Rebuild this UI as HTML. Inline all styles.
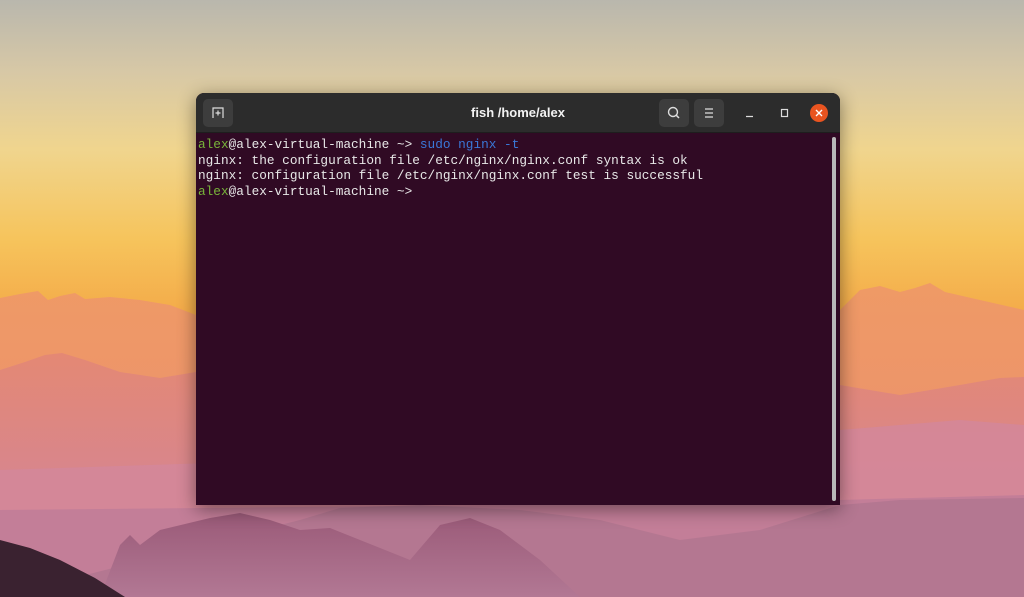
<!DOCTYPE html>
<html><head><meta charset="utf-8"><style>
*{margin:0;padding:0;box-sizing:border-box}
body{width:1024px;height:597px;overflow:hidden;position:relative;font-family:"Liberation Sans",sans-serif}
#bg{position:absolute;left:0;top:0}
.win{position:absolute;left:196px;top:93px;width:644px;height:412px;border-radius:8px 8px 0 0;overflow:hidden;box-shadow:0 4px 18px rgba(0,0,0,.45);background:#300a24}
.hdr{height:40px;background:#2c2c2c;position:relative;border-bottom:1px solid #1e1e1e}
.btn{position:absolute;top:6px;width:30px;height:28px;background:#3d3d3d;border-radius:5px}
.title{position:absolute;left:0;right:0;top:12px;text-align:center;color:#f2f2f2;font-weight:bold;font-size:13px}
.term{position:absolute;left:2px;top:43px;font-family:"Liberation Mono",monospace;font-size:12.75px;line-height:15.5px;color:#e8e8e8;white-space:pre}
.g{color:#78b53a}.b{color:#3a78d8}
.sb{position:absolute;right:4px;top:44px;width:4px;height:364px;background:#b8b8b8;border-radius:2px}
</style></head><body>
<svg id="bg" width="1024" height="597" viewBox="0 0 1024 597">
<defs><linearGradient id="sky" x1="0" y1="0" x2="0" y2="1">
<stop offset="0" stop-color="#b9b7ad"/><stop offset=".12" stop-color="#d7c8a6"/><stop offset=".25" stop-color="#f0d58e"/><stop offset=".4" stop-color="#f6c45c"/><stop offset=".52" stop-color="#f4ac4a"/><stop offset="1" stop-color="#f0a050"/></linearGradient>
<linearGradient id="m1" x1="0" y1="0" x2="0" y2="1"><stop offset="0" stop-color="#ef9a66"/><stop offset="1" stop-color="#e98c70"/></linearGradient>
<linearGradient id="m2" x1="0" y1="0" x2="0" y2="1"><stop offset="0" stop-color="#e48874"/><stop offset=".5" stop-color="#d8868c"/><stop offset="1" stop-color="#c98296"/></linearGradient>
<linearGradient id="m3" x1="0" y1="0" x2="0" y2="1"><stop offset="0" stop-color="#9a5a78"/><stop offset="1" stop-color="#b27894"/></linearGradient>
</defs>
<rect width="1024" height="597" fill="url(#sky)"/>
<path d="M0 298 L20 294 L38 291 L48 300 L60 296 L75 293 L85 299 L110 297 L140 300 L170 305 L196 315 L500 320 L840 310 L860 290 L880 286 L900 292 L915 288 L930 283 L945 292 L980 300 L1024 310 L1024 597 L0 597Z" fill="url(#m1)"/>
<path d="M0 370 L25 362 L45 355 L62 353 L85 360 L120 372 L160 378 L196 372 L500 380 L840 385 L900 395 L960 385 L1000 378 L1024 377 L1024 597 L0 597Z" fill="url(#m2)"/>
<path d="M0 470 L300 460 L700 450 L840 430 L900 425 L960 420 L1024 425 L1024 597 L0 597Z" fill="#d3879a" opacity=".85"/>
<path d="M0 510 L500 505 L840 500 L1024 495 L1024 597 L0 597Z" fill="#c07c98" opacity=".85"/>
<path d="M300 520 L340 508 L420 505 L520 510 L600 520 L680 540 L760 530 L840 505 L900 500 L1024 498 L1024 597 L0 597 Z" fill="#b07590" opacity=".8"/>
<path d="M100 597 L120 545 L130 535 L140 545 L160 530 L210 518 L240 513 L270 520 L300 530 L330 528 L360 540 L410 560 L440 525 L470 518 L500 530 L540 560 L580 597Z" fill="url(#m3)"/>
<path d="M0 540 L30 548 L60 560 L95 578 L125 597 L0 597Z" fill="#3a2230"/>
</svg>
<div class="win">
<div class="hdr">
<div class="btn" style="left:7px"><svg width="30" height="28"><path d="M10 19 V9 H20 V19" fill="none" stroke="#ddd" stroke-width="1.2"/><path d="M15 11.5 V16.5 M12.5 14 H17.5" stroke="#ddd" stroke-width="1.2"/></svg></div>
<div class="title">fish /home/alex</div>
<div class="btn" style="left:463px"><svg width="30" height="28"><circle cx="14" cy="13" r="4.5" fill="none" stroke="#ddd" stroke-width="1.4"/><path d="M17.3 16.3 L20 19" stroke="#ddd" stroke-width="1.5"/></svg></div>
<div class="btn" style="left:498px"><svg width="30" height="28"><path d="M11 10 H19 M11 14 H19 M11 18 H19" stroke="#ddd" stroke-width="1.2"/></svg></div>
<svg style="position:absolute;left:548px;top:14px" width="12" height="12"><path d="M2 9.5 H9" stroke="#ddd" stroke-width="1.2"/></svg>
<svg style="position:absolute;left:583px;top:14px" width="12" height="12"><rect x="2.5" y="2.5" width="6" height="7" fill="none" stroke="#ddd" stroke-width="1.2"/></svg>
<div style="position:absolute;left:614px;top:11px;width:18px;height:18px;border-radius:50%;background:#e95420"><svg width="18" height="18"><path d="M6 6 L12 12 M12 6 L6 12" stroke="#fff" stroke-width="1.4"/></svg></div>
</div>
<div class="term" style="top:44px"><span class="g">alex</span>@alex-virtual-machine ~&gt; <span class="b">sudo nginx -t</span>
nginx: the configuration file /etc/nginx/nginx.conf syntax is ok
nginx: configuration file /etc/nginx/nginx.conf test is successful
<span class="g">alex</span>@alex-virtual-machine ~&gt;</div>
<div class="sb"></div>
</div>
</body></html>
